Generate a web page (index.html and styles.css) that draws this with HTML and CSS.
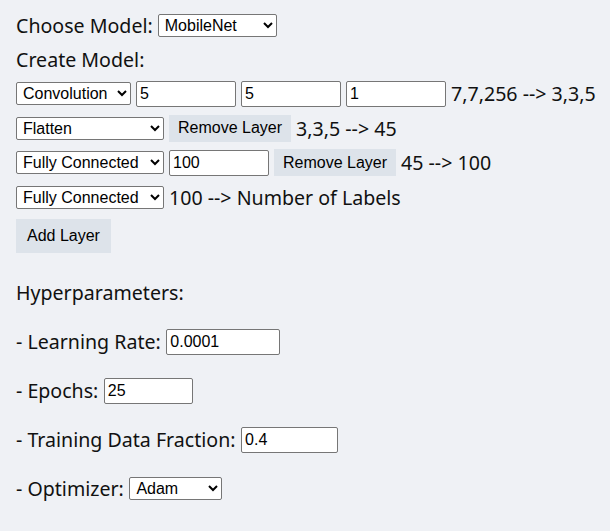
FILE: index.html
```html
<!DOCTYPE html>
<html lang="en">
<head>
  <meta charset="UTF-8" />
  <meta name="viewport" content="width=device-width, initial-scale=1.0" />
  <title>Model Builder</title>
  <link rel="stylesheet" href="styles.css">
</head>
<body>
  <div class="container">
    <div class="row">
      <label for="model">Choose Model:</label>
      <select id="model" class="sel-model">
        <option>MobileNet</option>
      </select>
    </div>

    <div class="row">Create Model:</div>

    <div class="row">
      <select class="sel-conv"><option>Convolution</option></select>
      <input type="text" class="num" value="5" />
      <input type="text" class="num" value="5" />
      <input type="text" class="num" value="1" />
      <span>7,7,256 --&gt; 3,3,5</span>
    </div>

    <div class="row">
      <select class="sel-layer"><option>Flatten</option></select>
      <button class="remove">Remove Layer</button>
      <span>3,3,5 --&gt; 45</span>
    </div>

    <div class="row">
      <select class="sel-layer"><option>Fully Connected</option></select>
      <input type="text" class="num" value="100" />
      <button class="remove">Remove Layer</button>
      <span>45 --&gt; 100</span>
    </div>

    <div class="row">
      <select class="sel-layer"><option>Fully Connected</option></select>
      <span>100 --&gt; Number of Labels</span>
    </div>

    <button class="add">Add Layer</button>

    <div class="hyper">
      <div class="hrow">Hyperparameters:</div>
      <div class="hrow">
        <label for="lr">- Learning Rate:</label>
        <input type="text" id="lr" class="in-lr" value="0.0001" />
      </div>
      <div class="hrow">
        <label for="epochs">- Epochs:</label>
        <input type="text" id="epochs" class="in-epochs" value="25" />
      </div>
      <div class="hrow">
        <label for="frac">- Training Data Fraction:</label>
        <input type="text" id="frac" class="in-frac" value="0.4" />
      </div>
      <div class="hrow">
        <label for="opt">- Optimizer:</label>
        <select id="opt" class="sel-opt"><option>Adam</option></select>
      </div>
    </div>
  </div>
</body>
</html>
```

FILE: styles.css
```css
body {
  margin: 0;
  padding: 0;
  background: #eff1f5;
  color: #111;
  font-family: "Noto Sans", "Open Sans", sans-serif;
  font-size: 19.6px;
  overflow: hidden;
}

.container {
  padding: 8px 16px;
}

.row {
  display: flex;
  align-items: center;
  gap: 5px;
  height: 34.4px;
  white-space: nowrap;
}

.row > *,
.hrow > * {
  flex-shrink: 0;
}

select,
input[type="text"],
button {
  font-family: "Liberation Sans", Arial, sans-serif;
  font-size: 16px;
  color: #000;
  margin: 0;
  box-sizing: border-box;
}

select {
  height: 23px;
  padding: 0 2px;
  border: 1px solid #767676;
  border-radius: 2px;
  background: #fff;
}

input[type="text"] {
  height: 26px;
  padding: 1px 3px;
  border: 1px solid #767676;
  border-radius: 2px;
  background: #fff;
}

button {
  border: none;
  background: #dde3ea;
  cursor: pointer;
}

.sel-model { width: 119px; }
.sel-conv { width: 115px; }
.sel-layer { width: 148px; }
.sel-opt { width: 93px; }

.num { width: 100px; }

.remove {
  height: 27px;
  padding: 0 9px;
}

.add {
  margin-top: 5px;
  height: 34px;
  padding: 0 11px;
}

.hyper {
  margin-top: 15px;
}

.hrow {
  display: flex;
  align-items: center;
  gap: 5.5px;
  height: 49px;
}

.in-lr { width: 114px; }
.in-epochs { width: 89px; }
.in-frac { width: 97px; }
```
